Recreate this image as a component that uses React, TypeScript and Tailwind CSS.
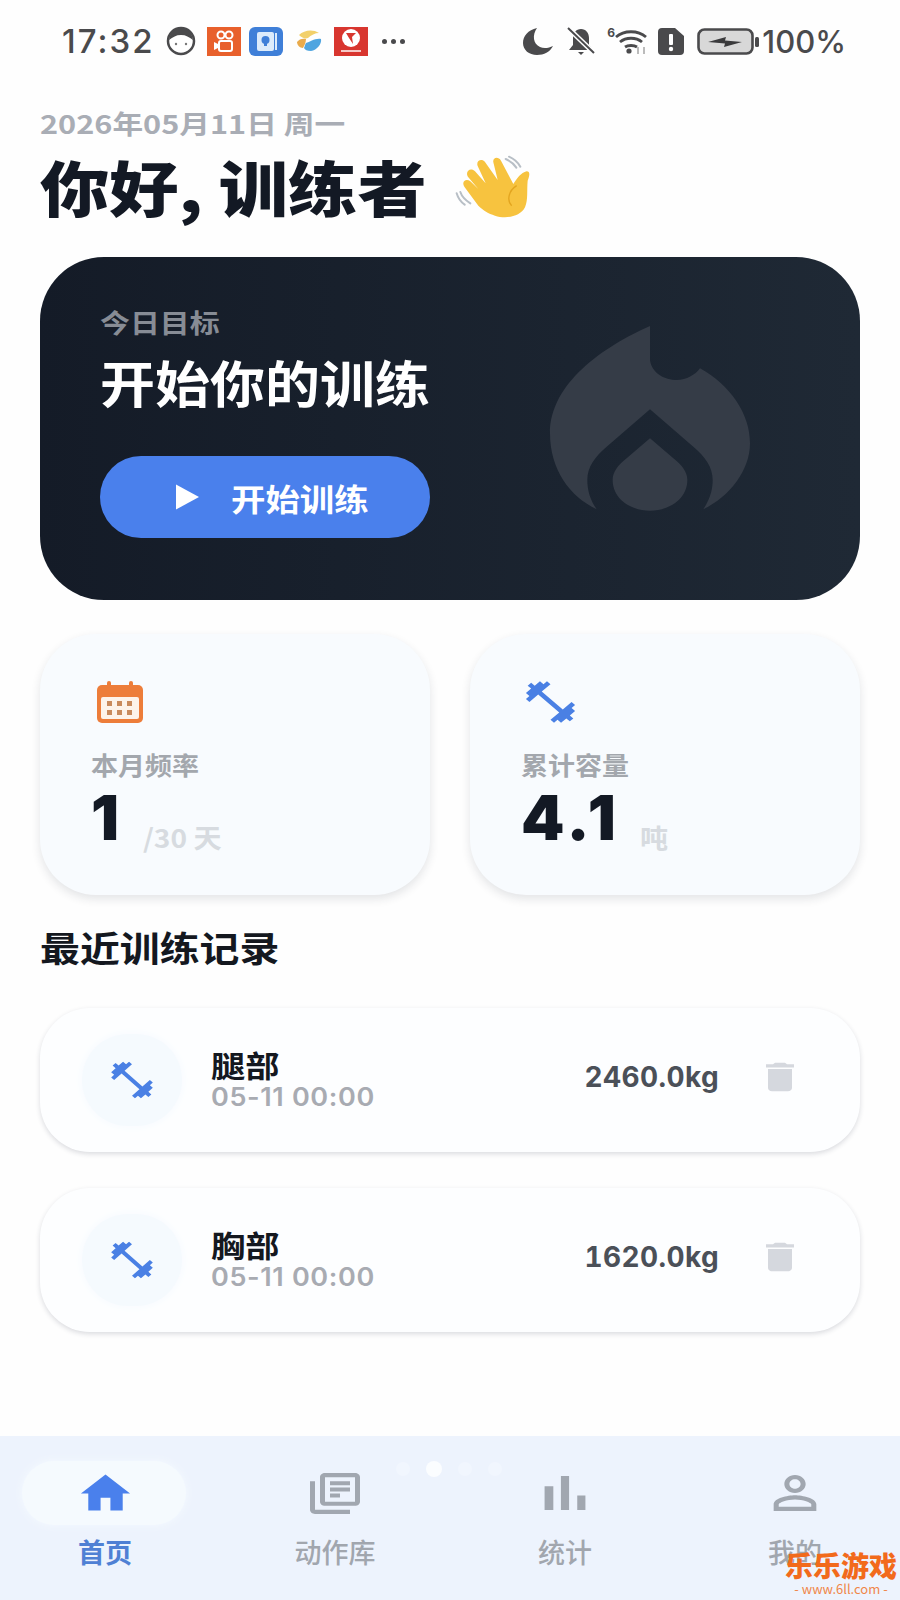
const dumbbell =
  "M20.57 14.86L22 13.43 20.57 12 17 15.57 8.43 7 12 3.43 10.57 2 9.14 3.43 7.71 2 5.57 4.14 4.14 2.71 2.71 4.14l1.43 1.43L2 7.71l1.43 1.43L2 10.57 3.43 12 7 8.43 15.57 17 12 20.57 13.43 22l1.43-1.43L16.29 22l2.14-2.14 1.43 1.43 1.43-1.43-1.43-1.43L22 16.29z";

// the reference is stretched sideways, so icons and headings get squashed to match
function Icon({ d, className }: { d: string; className: string }) {
  return (
    <svg viewBox="0 0 24 24" fill="currentColor" preserveAspectRatio="none" className={className}>
      <path d={d} />
    </svg>
  );
}

function StatusBar() {
  return (
    <div className="h-[82px] shrink-0 flex items-center justify-between pl-[62px] pr-[54px] text-[#4a4a4c] font-['Inter','Noto_Sans_CJK_SC',sans-serif]">
      <div className="flex items-center">
        <span className="text-[33px] font-medium tracking-[2px] leading-none">17:32</span>
        <svg viewBox="0 0 30 30" className="w-[30px] h-[30px] ml-[12px]">
          <circle cx="15" cy="15" r="13" fill="#fff" stroke="#4a4a4c" strokeWidth="2.5" />
          <path d="M3 14C4 5 10 2 15 2s11 3 12 12c-4-3-7-5-12-5S7 11 3 14z" fill="#4a4a4c" />
          <circle cx="10" cy="18" r="1.2" fill="#777" />
          <circle cx="20" cy="18" r="1.2" fill="#777" />
        </svg>
        <svg viewBox="0 0 34 29" className="w-[34px] h-[29px] ml-[11px]">
          <rect width="34" height="29" fill="#e8602c" />
          <circle cx="14" cy="8" r="3.5" fill="none" stroke="#fff" strokeWidth="2" />
          <circle cx="22" cy="8" r="3.5" fill="none" stroke="#fff" strokeWidth="2" />
          <rect x="12" y="14" width="13" height="10" rx="2" fill="none" stroke="#fff" strokeWidth="2" />
          <path d="M11 17l-4-2v8l4-2z" fill="#fff" />
        </svg>
        <svg viewBox="0 0 34 29" className="w-[34px] h-[29px] ml-[8px]">
          <rect width="34" height="29" rx="6" fill="#3f7fd8" />
          <rect x="8" y="5" width="17" height="19" rx="2" fill="#dcebfb" />
          <rect x="26" y="6" width="2" height="17" fill="#dcebfb" />
          <circle cx="16.5" cy="13" r="4" fill="#3f7fd8" />
          <rect x="15" y="16" width="3" height="3" fill="#3f7fd8" />
        </svg>
        <svg viewBox="0 0 26 24" className="w-[26px] h-[24px] ml-[13px]">
          <path d="M3 6C8 1 17 0 23 4c-4 0-8 2-11 5-3 1-6 0-9-3z" fill="#f2d06a" />
          <path d="M1 13c2-3 6-4 9-3 0 4-2 7-3 9-3 0-6-3-6-6z" fill="#e9ab4c" />
          <path d="M10 14c4-1 9-5 15-4 1 5-4 11-10 12-4 0-6-1-7-3 1-2 1-4 2-5z" fill="#4fa5e0" />
        </svg>
        <svg viewBox="0 0 34 29" className="w-[34px] h-[29px] ml-[12px]">
          <rect width="34" height="29" fill="#d8362f" />
          <circle cx="17" cy="11" r="9" fill="#fff" />
          <path d="M12 6h10l-4 4 1 7-4-6z" fill="#d8362f" />
          <rect x="7" y="23" width="20" height="2" fill="#f6c9c6" />
        </svg>
        <div className="flex items-center gap-[4px] ml-[14px]">
          <span className="w-[5px] h-[5px] rounded-full bg-[#4a4a4c]" />
          <span className="w-[5px] h-[5px] rounded-full bg-[#4a4a4c]" />
          <span className="w-[5px] h-[5px] rounded-full bg-[#4a4a4c]" />
        </div>
      </div>
      <div className="flex items-center">
        <svg viewBox="0 0 30 27" className="w-[30px] h-[27px]" fill="#4a4a4c">
          <path d="M14 0C5 2 0 8 0 15c0 7 6 12 14 12 7 0 13-3 16-9-4 2-9 3-13 1C10 16 9 7 14 0z" />
        </svg>
        <svg viewBox="0 0 30 28" className="w-[30px] h-[28px] ml-[13px]" fill="#4a4a4c">
          <path d="M15 2c5 0 8 4 8 9v7l4 5H3l4-5v-7c0-5 3-9 8-9z" />
          <path d="M12 25h6l-3 3z" />
          <path d="M2 1l26 25" stroke="#fff" strokeWidth="5" />
          <path d="M2 1l26 25" stroke="#4a4a4c" strokeWidth="2" />
        </svg>
        <div className="relative w-[41px] h-[28px] ml-[11px]">
          <svg viewBox="0 0 41 28" className="w-[41px] h-[28px]" fill="none" stroke="#4a4a4c" strokeWidth="2.8">
            <path d="M9 10c8-7 22-7 30 0" />
            <path d="M13 15c6-5 16-5 22 0" />
            <path d="M18 20c3-2 9-2 12 0" />
            <circle cx="22" cy="24" r="2.6" fill="#4a4a4c" stroke="none" />
            <path d="M31 20v7M37 20v7" stroke="#bbb" strokeWidth="2" />
          </svg>
          <span className="absolute left-0 top-0 text-[12px] leading-[12px] font-bold">6</span>
        </div>
        <svg viewBox="0 0 26 27" className="w-[26px] h-[27px] ml-[10px]">
          <path d="M4 0h13l9 8v15a4 4 0 0 1-4 4H4a4 4 0 0 1-4-4V4a4 4 0 0 1 4-4z" fill="#4a4a4c" />
          <rect x="11" y="6" width="4" height="11" rx="1" fill="#fff" />
          <circle cx="13" cy="21" r="2.2" fill="#fff" />
        </svg>
        <svg viewBox="0 0 62 27" className="w-[62px] h-[27px] ml-[13px]">
          <rect x="1.5" y="1.5" width="54" height="24" rx="6" fill="#d8d8d8" stroke="#4a4a4c" strokeWidth="2.6" />
          <rect x="58" y="9" width="4" height="10" rx="1.5" fill="#4a4a4c" />
          <path d="M11 14l18-5-1 3.5 17 1.5-18 5 1-3.5z" fill="#3a3a3c" />
        </svg>
        <span className="text-[31px] font-medium leading-none ml-[3px]">100%</span>
      </div>
    </div>
  );
}

function WaveHand() {
  return (
    <svg viewBox="0 0 300 255" className="w-[100px] h-[85px] ml-[70px] shrink-0">
      <path d="M182 45c14 6 24 14 32 26M192 38c14 6 26 16 34 30M35 148c4 14 12 26 24 34M46 144c4 12 14 24 30 34" fill="none" stroke="#b8bfc6" strokeWidth="6" strokeLinecap="round" />
      <path d="M100 185L58 128C48 112 64 102 76 112L100 135L70 100C58 84 76 68 90 82L122 118L98 66C92 50 110 42 120 54L158 108L145 55C142 40 160 36 168 50L205 120C215 105 228 85 245 82C258 82 252 100 248 110C245 140 250 165 240 190C225 220 180 225 150 215C130 208 115 200 100 185Z" fill="#f7c33f" />
      <path d="M215 125C190 140 185 170 200 185" fill="none" stroke="#e3a51f" strokeWidth="4" />
    </svg>
  );
}

function Flame() {
  return (
    <svg viewBox="0 0 720 630" className="absolute left-[490px] top-[53px] w-[240px] h-[210px]" fill="#353c47">
      <path d="M360 48L360 150C365 190 405 210 440 210C470 210 495 195 510 175C600 225 660 310 660 400C660 480 600 560 520 598C545 560 548 530 548 510C548 470 525 440 490 410L360 298L230 410C195 440 172 470 172 510C172 540 180 570 200 598C120 560 60 480 60 370C60 220 220 110 360 48Z" />
      <path d="M360 385L290 445C265 465 248 485 248 510C248 565 300 602 360 602C420 602 472 565 472 510C472 485 455 465 430 445Z" />
    </svg>
  );
}

function Hero() {
  return (
    <div className="relative mt-[35px] h-[343px] rounded-[64px] bg-gradient-to-r from-[#141b27] to-[#1f2935] pl-[60px] pt-[49px]">
      <Flame />
      <div className="w-fit origin-left scale-x-[1.15] text-[26px] leading-[32px] font-semibold text-[#878c95]">今日目标</div>
      <div className="mt-[7px] w-fit origin-left scale-x-[1.1] text-[50px] leading-[72px] font-bold text-white">开始你的训练</div>
      <button className="mt-[39px] w-[330px] h-[82px] rounded-full bg-[#4a80ec] flex items-center pl-[76px] text-white">
        <svg viewBox="0 0 24 26" className="w-[23px] h-[26px]" fill="#fff">
          <path d="M0 0l24 13L0 26z" />
        </svg>
        <span className="ml-[32px] origin-left scale-x-[1.11] text-[31px] leading-none font-bold">开始训练</span>
      </button>
    </div>
  );
}

function StatCard({
  icon,
  label,
  value,
  unit,
}: {
  icon: React.ReactNode;
  label: string;
  value: string;
  unit: string;
}) {
  return (
    <div className="h-[261px] rounded-[56px] bg-[#f8fbfe] shadow-[0_4px_10px_rgba(30,40,60,0.12)] pl-[51px] pt-[44px]">
      <div className="h-[48px] flex items-center">{icon}</div>
      <div className="mt-[20px] w-fit origin-left scale-x-[1.08] text-[25px] leading-[36px] font-semibold text-[#a3a7ad]">{label}</div>
      <div className="flex items-end">
        <span className="text-[62px] leading-[72px] font-black tracking-[4px] text-[#131924] font-['Inter','Noto_Sans_CJK_SC',sans-serif]">{value}</span>
        <span className="ml-[20px] mb-[1px] origin-left scale-x-[1.08] text-[26px] leading-[32px] font-bold text-[#d7dbe0]">{unit}</span>
      </div>
    </div>
  );
}

function CalendarIcon() {
  return (
    <svg viewBox="0 0 46 42" className="w-[46px] h-[42px] ml-[6px]">
      <rect x="10" y="0" width="4" height="8" rx="2" fill="#ed7d3a" />
      <rect x="32" y="0" width="4" height="8" rx="2" fill="#ed7d3a" />
      <rect x="0" y="4" width="46" height="38" rx="5" fill="#ed7d3a" />
      <rect x="4" y="16" width="38" height="22" rx="2" fill="#fdf3ea" />
      {[10, 20, 30].map((x) =>
        [20, 29].map((y) => <rect key={`${x}-${y}`} x={x} y={y} width="5" height="5" fill="#c98a5c" />),
      )}
    </svg>
  );
}

function RecordRow({ name, weight }: { name: string; weight: string }) {
  return (
    <div className="h-[144px] rounded-[50px] bg-[#fdfeff] shadow-[0_2px_5px_rgba(30,40,60,0.16)] flex items-center pl-[42px] pr-[56px]">
      <div className="w-[100px] h-[92px] rounded-full bg-[#f5fafe] shadow-[0_0_8px_#f5fafe] flex items-center justify-center">
        <Icon d={dumbbell} className="w-[50px] h-[44px] text-[#4a80e4]" />
      </div>
      <div className="ml-[29px] mb-[2px]">
        <div className="w-fit origin-left scale-x-[1.14] text-[30px] leading-[36px] font-bold text-[#14181f]">{name}</div>
        <div className="w-fit origin-left scale-x-[1.08] text-[25px] leading-[30px] font-semibold tracking-[0.6px] text-[#a8abb2] font-['Inter','Noto_Sans_CJK_SC',sans-serif]">05-11 00:00</div>
      </div>
      <div className="ml-auto mb-[6px] text-[28px] leading-none font-bold tracking-[0.4px] tabular-nums text-[#4b5058] font-['Inter','Noto_Sans_CJK_SC',sans-serif]">{weight}</div>
      <Icon d="M6 19c0 1.1.9 2 2 2h8c1.1 0 2-.9 2-2V7H6v12zM19 4h-3.5l-1-1h-5l-1 1H5v2h14V4z" className="w-[48px] h-[38px] ml-[37px] mb-[6px] text-[#d5d8de]" />
    </div>
  );
}

const tabs = [
  {
    label: "首页",
    size: "w-[59px] h-[51px]",
    d: "M10 20v-6h4v6h5v-8h3L12 3 2 12h3v8z",
  },
  {
    label: "动作库",
    size: "w-[60px] h-[49px]",
    d: "M4 6H2v14c0 1.1.9 2 2 2h14v-2H4V6zm16-4H8c-1.1 0-2 .9-2 2v12c0 1.1.9 2 2 2h12c1.1 0 2-.9 2-2V4c0-1.1-.9-2-2-2zm0 14H8V4h12v12zM10 9h8v2h-8zm0 3h4v2h-4zm0-6h8v2h-8z",
  },
  {
    label: "统计",
    size: "w-[70px] h-[58px]",
    d: "M5 9.2h3V19H5zM10.6 5h2.8v14h-2.8zm5.6 8H19v6h-2.8z",
  },
  {
    label: "我的",
    size: "w-[64px] h-[54px]",
    d: "M12 5.9c1.16 0 2.1.94 2.1 2.1s-.94 2.1-2.1 2.1S9.9 9.16 9.9 8s.94-2.1 2.1-2.1m0 9c2.97 0 6.1 1.46 6.1 2.1v1.1H5.9V17c0-.64 3.13-2.1 6.1-2.1M12 4C9.79 4 8 5.79 8 8s1.79 4 4 4 4-1.79 4-4-1.79-4-4-4zm0 9c-2.67 0-8 1.34-8 4v3h16v-3c0-2.66-5.33-4-8-4z",
  },
];

function BottomNav() {
  return (
    <div className="relative mt-auto h-[164px] shrink-0 bg-[#edf3fd] flex justify-center overflow-hidden">
      {tabs.map((tab, i) => (
        <div key={tab.label} className="relative w-[230px] shrink-0 flex flex-col items-center pt-[32px]">
          {i === 0 && <div className="absolute left-[32px] top-[25px] w-[164px] h-[64px] rounded-[32px] bg-[#f5fafe] shadow-[0_0_8px_#f5fafe]" />}
          <div className={i === 0 ? "relative h-[50px] flex items-center text-[#4a80ec]" : "relative h-[50px] flex items-center text-[#a1a7b0]"}>
            <Icon d={tab.d} className={tab.size} />
          </div>
          <span className={i === 0 ? "mt-[18px] text-[27px] leading-[32px] font-bold text-[#4f80d4]" : "mt-[18px] text-[27px] leading-[32px] font-medium text-[#a1a6ae]"}>
            {tab.label}
          </span>
        </div>
      ))}
      <div className="absolute left-[396px] top-[25px] flex items-center gap-[16px]">
        <span className="w-[14px] h-[14px] rounded-full bg-[#f1f6fe]" />
        <span className="w-[16px] h-[16px] rounded-full bg-[#fbfdff]" />
        <span className="w-[14px] h-[14px] rounded-full bg-[#f1f6fe]" />
        <span className="w-[14px] h-[14px] rounded-full bg-[#f1f6fe]" />
      </div>
    </div>
  );
}

export default function App() {
  return (
    <div className="relative h-[1600px] w-[900px] overflow-hidden bg-[#fefefe] flex flex-col font-['Noto_Sans_CJK_SC','Inter',sans-serif]">
      <StatusBar />
      <div className="px-[40px]">
        <div className="mt-[25px] w-fit origin-left scale-x-[1.18] text-[26px] leading-[32px] font-bold text-[#a9adb5]">2026年05月11日 周一</div>
        <div className="mt-[11px] flex items-center h-[72px]">
          <span className="origin-left scale-x-[1.155] text-[60px] leading-[72px] font-black text-[#131924] whitespace-nowrap">你好, 训练者</span>
          <WaveHand />
        </div>
        <Hero />
        <div className="mt-[34px] grid grid-cols-2 gap-[40px]">
          <StatCard icon={<CalendarIcon />} label="本月频率" value="1" unit="/30 天" />
          <StatCard icon={<Icon d={dumbbell} className="w-[59px] h-[50px] text-[#4a80e4]" />} label="累计容量" value="4.1" unit="吨" />
        </div>
        <div className="mt-[28px] w-fit origin-left scale-x-[1.14] text-[35px] leading-[48px] font-bold text-[#14181f]">最近训练记录</div>
        <div className="mt-[37px] flex flex-col gap-[36px]">
          <RecordRow name="腿部" weight="2460.0kg" />
          <RecordRow name="胸部" weight="1620.0kg" />
        </div>
      </div>
      <BottomNav />
      <div className="absolute left-[785px] top-[1550px] w-[112px] text-center">
        <div className="text-[28px] leading-[30px] font-black text-[#f26a1b] whitespace-nowrap">乐乐游戏</div>
        <div className="text-[13px] leading-[18px] text-[#f0874a] whitespace-nowrap">- www.6ll.com -</div>
      </div>
    </div>
  );
}
